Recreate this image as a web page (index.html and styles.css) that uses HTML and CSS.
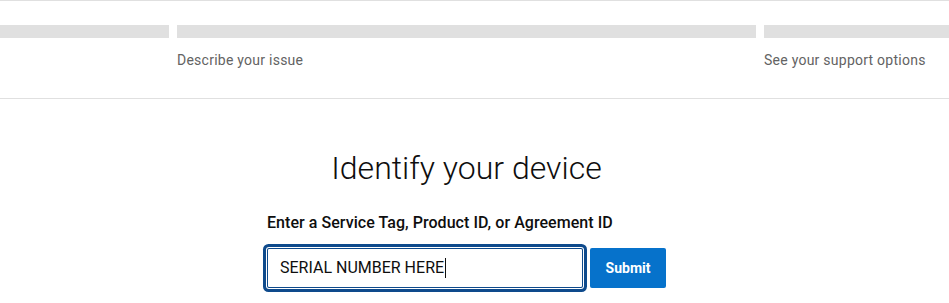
FILE: index.html
```html
<!DOCTYPE html>
<html lang="en">
<head>
<meta charset="utf-8">
<title>Identify your device</title>
<link rel="stylesheet" href="styles.css">
</head>
<body>
<div class="stepper">
  <div class="step step-1">
    <div class="bar"></div>
  </div>
  <div class="step step-2">
    <div class="bar"></div>
    <div class="step-label">Describe your issue</div>
  </div>
  <div class="step step-3">
    <div class="bar"></div>
    <div class="step-label">See your support options</div>
  </div>
</div>
<main class="main">
  <h1 class="title">Identify your device</h1>
  <div class="form">
    <label class="label">Enter a Service Tag, Product ID, or Agreement ID</label>
    <div class="row">
      <div class="input">SERIAL NUMBER HERE<span class="caret"></span></div>
      <button class="submit">Submit</button>
    </div>
    <a class="link" href="#">Where can I find my Service Tag or Product ID, or identify my product?</a>
  </div>
</main>
</body>
</html>
```
FILE: styles.css
```css
html, body {
  margin: 0;
  padding: 0;
  background: #fff;
  overflow: hidden;
}
body {
  font-family: Roboto, "Liberation Sans", Arial, sans-serif;
  color: #0e0e0e;
  width: 949px;
  height: 303px;
}
.stepper {
  display: flex;
  gap: 8px;
  border-top: 1px solid #e0e0e0;
  border-bottom: 1px solid #e0e0e0;
  padding: 24px 0 28px;
  height: 45px;
}
.step-1 { width: 169px; flex: none; }
.step-2 { width: 579px; flex: none; }
.step-3 { flex: 1; min-width: 0; }
.bar {
  height: 13px;
  background: #e0e0e0;
}
.step-label {
  margin-top: 12px;
  font-size: 14px;
  line-height: 20px;
  letter-spacing: 0.25px;
  color: #636363;
  white-space: nowrap;
}
.main {
  padding-right: 16px;
  display: flex;
  flex-direction: column;
  align-items: center;
}
.title {
  margin: 49px 0 0;
  font-size: 32px;
  line-height: 40px;
  font-weight: 300;
  color: #0e0e0e;
}
.form {
  width: 399px;
  margin-top: 23px;
  display: flex;
  flex-direction: column;
}
.label {
  font-size: 16px;
  line-height: 24px;
  font-weight: 500;
  letter-spacing: 0.05px;
  color: #0e0e0e;
}
.row {
  display: flex;
  gap: 7px;
  margin-top: 13px;
}
.input {
  box-sizing: border-box;
  width: 316px;
  height: 40px;
  border: 1px solid #0e4a8c;
  border-radius: 2px;
  box-shadow: 0 0 0 1px #fff, 0 0 0 4px #0e4a8c;
  padding: 0 12px;
  font-size: 16px;
  line-height: 38px;
  color: #0e0e0e;
  display: flex;
  align-items: center;
  white-space: nowrap;
}
.caret {
  display: inline-block;
  width: 1px;
  height: 20px;
  background: #0e0e0e;
  margin-left: 1px;
}
.submit {
  width: 76px;
  height: 40px;
  border: none;
  border-radius: 2px;
  background: #0672cb;
  color: #fff;
  font-family: Roboto, "Liberation Sans", Arial, sans-serif;
  font-size: 14px;
  font-weight: 700;
  padding: 0;
}
.link {
  margin-top: 11px;
  font-size: 14px;
  line-height: 20px;
  color: #0672cb;
  text-decoration: none;
  white-space: nowrap;
}
```
